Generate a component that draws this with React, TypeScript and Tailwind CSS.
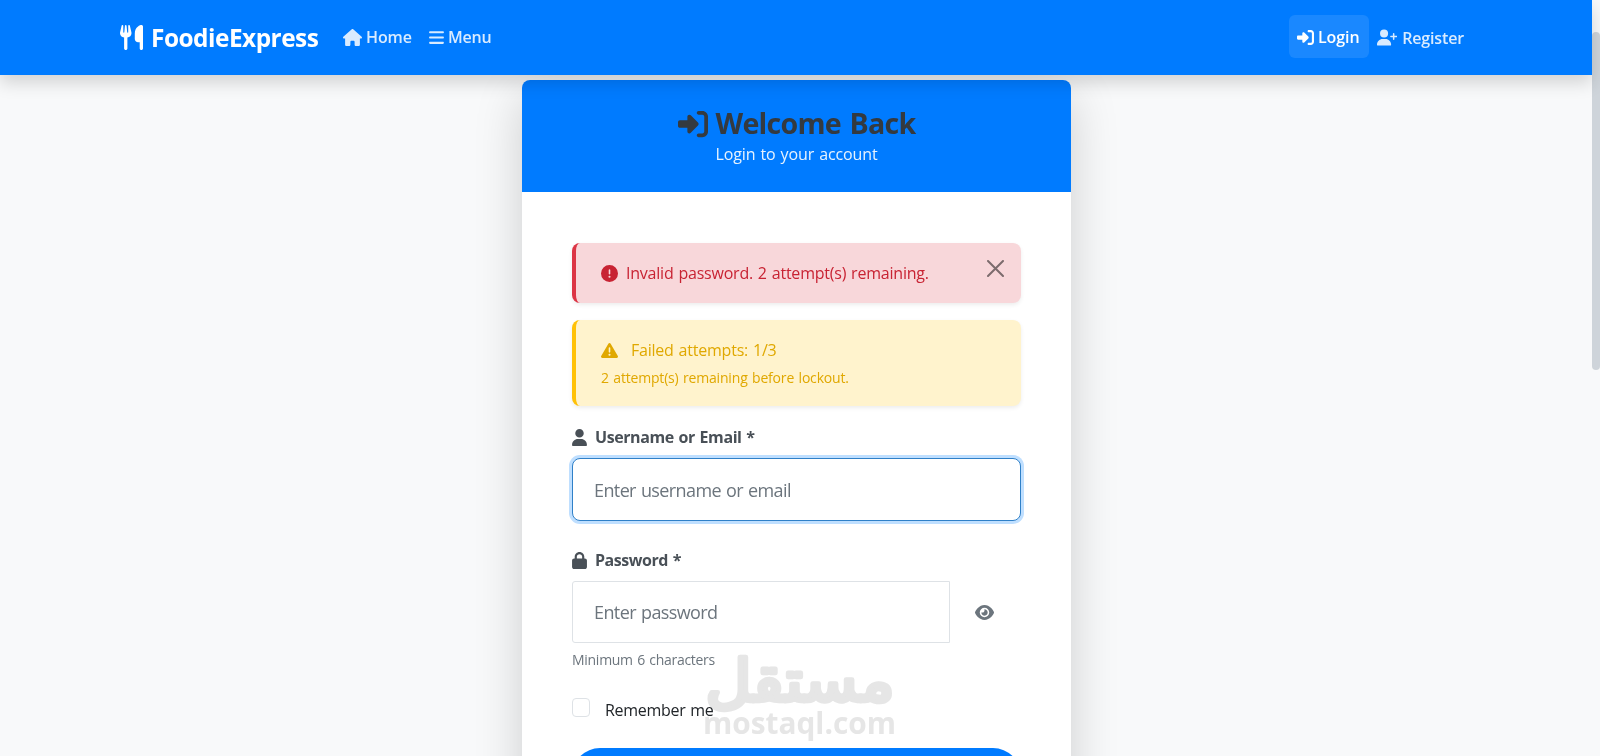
import {
  FaBars,
  FaCircleExclamation,
  FaEye,
  FaHouse,
  FaLock,
  FaRightToBracket,
  FaTriangleExclamation,
  FaUser,
  FaUserPlus,
  FaUtensils,
} from 'react-icons/fa6'

function Navbar() {
  return (
    <nav className="relative z-10 h-[75px] shrink-0 bg-[#007bff] px-[120px] flex items-center justify-between shadow-[0_8px_16px_rgba(0,0,0,0.15)]">
      <div className="flex items-center">
        <a className="flex items-center text-white">
          <FaUtensils className="w-[23px] h-[25px]" preserveAspectRatio="none" />
          <span className="ml-2 mt-0.5 w-[167px] text-[24.4px] font-bold tracking-[-0.5px] whitespace-nowrap">FoodieExpress</span>
        </a>
        <a className="ml-[25px] flex items-center text-white/85">
          <FaHouse className="w-[19px] h-[17px]" />
          <span className="ml-1 w-[46px] text-[16px] font-semibold tracking-[-0.1px]">Home</span>
        </a>
        <a className="ml-[17px] flex items-center text-white/85">
          <FaBars className="w-[15px] h-[17px]" />
          <span className="ml-1 text-[16px] font-semibold tracking-[-0.2px]">Menu</span>
        </a>
      </div>
      <div className="mr-2 flex items-center gap-2">
        <a className="h-[43px] w-20 -mt-[2px] px-2 flex items-center rounded-md bg-white/10 text-white">
          <FaRightToBracket className="w-[17px] h-[17px] mt-px" />
          <span className="ml-1 mt-px text-[16px] font-semibold tracking-[-0.1px]">Login</span>
        </a>
        <a className="w-[87px] flex items-center text-white/85">
          <FaUserPlus className="w-[21px] h-[17px]" />
          <span className="ml-[5px] text-[16px] font-semibold tracking-[-0.15px]">Register</span>
        </a>
      </div>
    </nav>
  )
}

function Alerts() {
  return (
    <>
      <div className="h-[60px] pl-[25px] pr-[17px] flex items-center rounded-lg border-l-4 border-[#dc3545] bg-[#f8d7da] text-[#c82333] shadow-[0_2px_4px_rgba(0,0,0,0.075)]">
        <FaCircleExclamation className="w-[17px] h-[17px]" />
        <span className="ml-2 text-[16px] tracking-[-0.22px] [word-spacing:1px] whitespace-nowrap">Invalid password. 2 attempt(s) remaining.</span>
        <svg className="ml-auto -mt-[10px] w-[17px] h-[17px] text-black/50" viewBox="0 0 17 17" fill="none" stroke="currentColor" strokeWidth="2" strokeLinecap="round">
          <path d="M1 1l15 15M16 1L1 16" />
        </svg>
      </div>
      <div className="mt-[17px] h-[86px] pl-[25px] pt-[17px] rounded-lg border-l-4 border-[#ffc107] bg-[#fff3cd] text-[#e0a800] shadow-[0_2px_4px_rgba(0,0,0,0.075)]">
        <div className="h-[26px] flex items-center">
          <FaTriangleExclamation className="w-[17px] h-[17px]" />
          <span className="ml-[13px] text-[16px] tracking-[-0.22px] [word-spacing:1px]">Failed attempts: 1/3</span>
        </div>
        <div className="h-[29px] flex items-center text-[14px] tracking-[-0.18px] [word-spacing:1px]">2 attempt(s) remaining before lockout.</div>
      </div>
    </>
  )
}

function LoginForm() {
  return (
    <form>
      <label className="mt-[18px] h-[26px] flex items-center text-[#495057]">
        <FaUser className="w-[15px] h-[17px]" />
        <span className="ml-2 text-[16px] font-bold tracking-[-0.42px] [word-spacing:1px]">Username or Email *</span>
      </label>
      <input
        placeholder="Enter username or email"
        className="mt-2 block h-[63px] w-full rounded-lg border border-[#2f80c8] bg-white px-[21px] text-[18px] tracking-[-0.61px] [word-spacing:1px] placeholder:text-[#6c757d] outline-none shadow-[0_0_0_3px_#bfdfff]"
      />
      <label className="mt-[26px] h-[26px] flex items-center text-[#495057]">
        <FaLock className="w-[15px] h-[17px]" />
        <span className="ml-2 text-[16px] font-bold tracking-[-0.45px] [word-spacing:1px]">Password *</span>
      </label>
      <div className="mt-2 flex">
        <input
          type="password"
          placeholder="Enter password"
          className="block h-[62px] w-[378px] border border-[#dee2e6] bg-white px-[21px] text-[18px] tracking-[-0.6px] [word-spacing:1px] placeholder:text-[#6c757d] outline-none rounded-l-[3px]"
        />
        <button type="button" className="pr-0.5 flex flex-1 items-center justify-center text-[#6c757d]">
          <FaEye className="w-[19px] h-[17px]" />
        </button>
      </div>
      <div className="mt-1 h-6 flex items-center text-[14px] tracking-[-0.28px] [word-spacing:1px] text-[#6c757d]">Minimum 6 characters</div>
      <label className="mt-[26px] h-[26px] flex items-center text-[#212529]">
        <span className="-mt-[6px] w-[18px] h-[19px] rounded-[4px] border border-[#dee2e6] bg-white" />
        <span className="ml-[15px] text-[16px] tracking-[-0.3px] [word-spacing:1px]">Remember me</span>
      </label>
      <button type="button" className="mt-[25px] block h-[56px] w-full rounded-full bg-[#007bff]" />
    </form>
  )
}

function Watermark() {
  return (
    <svg className="absolute left-[700px] top-[646px] w-[200px] h-[100px] overflow-visible mix-blend-multiply pointer-events-none" viewBox="0 0 200 100" fill="#e6e6e6">
      <text
        x="100"
        y="55"
        textAnchor="middle"
        direction="rtl"
        textLength="189"
        lengthAdjust="spacingAndGlyphs"
        stroke="#e6e6e6"
        strokeWidth="4.5"
        strokeLinejoin="round"
        strokeLinecap="round"
        className="font-['DejaVu_Sans',sans-serif] text-[58px] font-normal"
      >
        مستقل
      </text>
      <text x="3" y="88" textLength="193" lengthAdjust="spacingAndGlyphs" className="font-['Open_Sans',sans-serif] text-[31px] font-bold">
        mostaql.com
      </text>
    </svg>
  )
}

export default function App() {
  return (
    <div className="relative flex h-[756px] w-[1600px] overflow-hidden bg-[#f8f9fa] font-['Open_Sans','Noto_Sans',sans-serif]">
      <div className="flex w-[1592px] flex-col">
        <Navbar />
        <main className="mt-[5px] ml-[522px] w-[549px] shrink-0 rounded-lg bg-white shadow-[0_16px_48px_rgba(0,0,0,0.175)]">
          <header className="h-[112px] pt-[23px] flex flex-col items-center rounded-t-lg bg-[#007bff]">
            <h1 className="h-[41px] flex items-center text-[#343a40]">
              <FaRightToBracket className="w-[30px] h-[30px]" />
              <span className="ml-2 text-[28.6px] font-bold tracking-[-0.75px] [word-spacing:2px]">Welcome Back</span>
            </h1>
            <p className="h-[20px] flex items-center text-[16px] tracking-[-0.12px] [word-spacing:1px] text-white/90">Login to your account</p>
          </header>
          <div className="h-[700px] px-[50px] pt-[51px]">
            <Alerts />
            <LoginForm />
          </div>
        </main>
      </div>
      <div className="w-2 pt-8">
        <div className="h-[338px] rounded-[4px] bg-[#ced4da]" />
      </div>
      <Watermark />
    </div>
  )
}
